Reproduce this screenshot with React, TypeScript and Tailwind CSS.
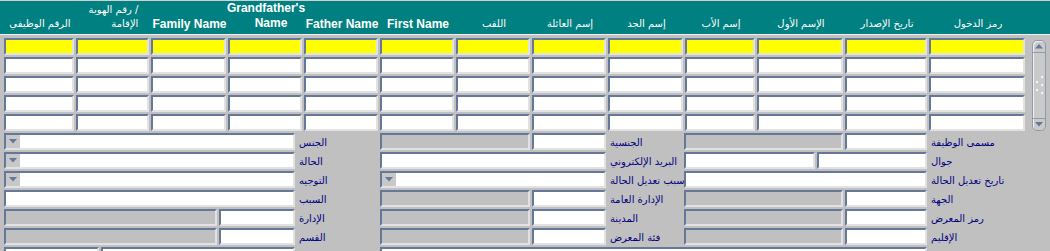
import React from 'react'

const arabic = { fontFamily: '"DejaVu Sans", "Noto Sans", sans-serif' }
const latin = { fontFamily: '"Liberation Sans", Arial, sans-serif' }

type Tone = 'white' | 'gray' | 'yellow'

const toneBg: Record<Tone, string> = {
  white: 'bg-white',
  gray: 'bg-[#c0c0c0]',
  yellow: 'bg-[#ffff00]',
}

function Field({ w, tone = 'white', select = false }: { w: string; tone?: Tone; select?: boolean }) {
  return (
    <div
      className={`${w} h-[17px] shrink-0 flex border-2 border-t-[#66789a] border-l-[#66789a] border-r-[#e2e2e2] border-b-[#e2e2e2] ${toneBg[tone]}`}
    >
      {select && (
        <div className="w-[14px] h-full bg-[#c8c8c8] flex items-center justify-center">
          <svg width="8" height="5" viewBox="0 0 8 5">
            <path d="M0 0 H8 L4 4.5 Z" fill="#66789a" />
          </svg>
        </div>
      )}
    </div>
  )
}

const columns = [
  { w: 'w-[72px]', label: 'الرقم الوظيفي' },
  { w: 'w-[75px]', label: 'id' },
  { w: 'w-[77px]', label: 'Family Name' },
  { w: 'w-[76px]', label: 'gf' },
  { w: 'w-[76px]', label: 'Father Name' },
  { w: 'w-[76px]', label: 'First Name' },
  { w: 'w-[76px]', label: 'اللقب' },
  { w: 'w-[76px]', label: 'إسم العائلة' },
  { w: 'w-[77px]', label: 'إسم الجد' },
  { w: 'w-[72px]', label: 'إسم الأب' },
  { w: 'w-[88px]', label: 'الإسم الأول' },
  { w: 'w-[84px]', label: 'تاريخ الإصدار' },
  { w: 'w-[98px]', label: 'رمز الدخول' },
]

const isLatin = (s: string) => /^[A-Za-z ]+$/.test(s)

function HeaderCell({ w, label }: { w: string; label: string }) {
  let content: React.ReactNode
  if (label === 'id') {
    content = (
      <div className="text-right text-[10px] leading-[14px]" style={arabic}>
        <div dir="ltr">رقم الهوية /</div>
        <div>الإقامة</div>
      </div>
    )
  } else if (label === 'gf') {
    content = (
      <div className="text-center text-[12px] font-bold leading-[15px]" style={latin}>
        <div>Grandfather's</div>
        <div className="pl-[10px]">Name</div>
      </div>
    )
  } else if (isLatin(label)) {
    content = (
      <div className="text-[12px] font-bold leading-[14px]" style={latin}>
        {label}
      </div>
    )
  } else {
    content = (
      <div className="text-[10px] leading-[14px]" style={arabic}>
        {label}
      </div>
    )
  }
  return <div className={`${w} shrink-0 flex items-end justify-center pb-[3px] text-white`}>{content}</div>
}

function Label({ children, w }: { children: React.ReactNode; w: string }) {
  return (
    <div className={`${w} h-[17px] shrink-0 pl-[4px] text-[10px] leading-[20px] text-[#000080] whitespace-nowrap`} style={arabic}>
      {children}
    </div>
  )
}

function Scrollbar() {
  return (
    <div className="ml-[5px] mt-[2px] w-[14px] h-[91px] rounded-[5px] border border-[#8e9ab0] bg-[#cacaca] flex flex-col justify-between shadow-[inset_1px_1px_0_#f2f2f2]">
      <div className="h-[12px] border-b border-[#8e9ab0] flex items-center justify-center">
        <svg width="8" height="5" viewBox="0 0 8 5">
          <path d="M0 4.5 H8 L4 0 Z" fill="#66789a" />
        </svg>
      </div>
      <svg width="12" height="20" viewBox="0 0 12 20" className="self-center">
        <rect x="8" y="0" width="2" height="2" fill="#f6f6f6" />
        <rect x="3" y="5" width="2" height="2" fill="#f6f6f6" />
        <rect x="8" y="8" width="2" height="2" fill="#f6f6f6" />
        <rect x="3" y="13" width="2" height="2" fill="#f6f6f6" />
        <rect x="8" y="16" width="2" height="2" fill="#f6f6f6" />
      </svg>
      <div className="h-[12px] border-t border-[#8e9ab0] flex items-center justify-center">
        <svg width="8" height="5" viewBox="0 0 8 5">
          <path d="M0 0 H8 L4 4.5 Z" fill="#66789a" />
        </svg>
      </div>
    </div>
  )
}

export default function App() {
  const rows: Tone[] = ['yellow', 'white', 'white', 'white', 'white']

  return (
    <div className="w-[1050px] h-[251px] overflow-hidden bg-[#c0c0c0]">
      {/* column headers */}
      <div className="h-[35px] bg-[#008080] border-t border-[#d0d0d0] border-b border-b-[#f0f0f0] flex pl-[4px]">
        {columns.map((c, i) => (
          <HeaderCell key={i} w={c.w} label={c.label} />
        ))}
      </div>

      {/* multi-record block */}
      <div className="flex pl-[4px] pt-[3px]">
        <div className="flex flex-col gap-[2px]">
          {rows.map((tone, r) => (
            <div key={r} className="flex">
              {columns.map((c, i) => (
                <div key={i} className={`${c.w} shrink-0 pr-[2px]`}>
                  <Field w="w-full" tone={tone} />
                </div>
              ))}
            </div>
          ))}
        </div>
        <Scrollbar />
      </div>

      {/* detail block */}
      <div className="flex flex-col gap-[2px] pt-[2px] pl-[4px]">
        <div className="flex">
          <div className="w-[291px] flex"><Field w="w-[291px]" select /></div>
          <Label w="w-[85px]">الجنس</Label>
          <div className="w-[226px] flex gap-[2px]"><Field w="w-[150px]" tone="gray" /><Field w="w-[74px]" /></div>
          <Label w="w-[78px]">الجنسية</Label>
          <div className="w-[243px] flex gap-[2px]"><Field w="w-[159px]" tone="gray" /><Field w="w-[82px]" /></div>
          <Label w="w-[80px]">مسمى الوظيفة</Label>
        </div>
        <div className="flex">
          <div className="w-[291px] flex"><Field w="w-[291px]" select /></div>
          <Label w="w-[85px]">الحالة</Label>
          <div className="w-[226px] flex"><Field w="w-[226px]" /></div>
          <Label w="w-[78px]">البريد الإلكتروني</Label>
          <div className="w-[243px] flex gap-[2px]"><Field w="w-[131px]" /><Field w="w-[110px]" /></div>
          <Label w="w-[80px]">جوال</Label>
        </div>
        <div className="flex">
          <div className="w-[291px] flex"><Field w="w-[291px]" select /></div>
          <Label w="w-[85px]">التوجيه</Label>
          <div className="w-[226px] flex"><Field w="w-[226px]" select /></div>
          <Label w="w-[78px]">سبب تعديل الحالة</Label>
          <div className="w-[243px] flex"><Field w="w-[243px]" /></div>
          <Label w="w-[80px]">تاريخ تعديل الحالة</Label>
        </div>
        <div className="flex">
          <div className="w-[291px] flex"><Field w="w-[291px]" /></div>
          <Label w="w-[85px]">السبب</Label>
          <div className="w-[226px] flex gap-[2px]"><Field w="w-[150px]" tone="gray" /><Field w="w-[74px]" /></div>
          <Label w="w-[78px]">الإدارة العامة</Label>
          <div className="w-[243px] flex gap-[2px]"><Field w="w-[159px]" tone="gray" /><Field w="w-[82px]" /></div>
          <Label w="w-[80px]">الجهة</Label>
        </div>
        <div className="flex">
          <div className="w-[291px] flex gap-[2px]"><Field w="w-[213px]" tone="gray" /><Field w="w-[76px]" /></div>
          <Label w="w-[85px]">الإدارة</Label>
          <div className="w-[226px] flex gap-[2px]"><Field w="w-[150px]" tone="gray" /><Field w="w-[74px]" /></div>
          <Label w="w-[78px]">المدينة</Label>
          <div className="w-[243px] flex gap-[2px]"><Field w="w-[159px]" tone="gray" /><Field w="w-[82px]" /></div>
          <Label w="w-[80px]">رمز المعرض</Label>
        </div>
        <div className="flex">
          <div className="w-[291px] flex gap-[2px]"><Field w="w-[213px]" tone="gray" /><Field w="w-[76px]" /></div>
          <Label w="w-[85px]">القسم</Label>
          <div className="w-[226px] flex gap-[2px]"><Field w="w-[150px]" tone="gray" /><Field w="w-[74px]" /></div>
          <Label w="w-[78px]">فئة المعرض</Label>
          <div className="w-[243px] flex gap-[2px]"><Field w="w-[159px]" tone="gray" /><Field w="w-[82px]" /></div>
          <Label w="w-[80px]">الإقليم</Label>
        </div>
        <div className="flex">
          <div className="w-[291px] flex gap-[2px]"><Field w="w-[95px]" /><Field w="w-[194px]" /></div>
          <div className="w-[85px] shrink-0" />
          <Field w="w-[547px]" />
        </div>
      </div>
    </div>
  )
}
